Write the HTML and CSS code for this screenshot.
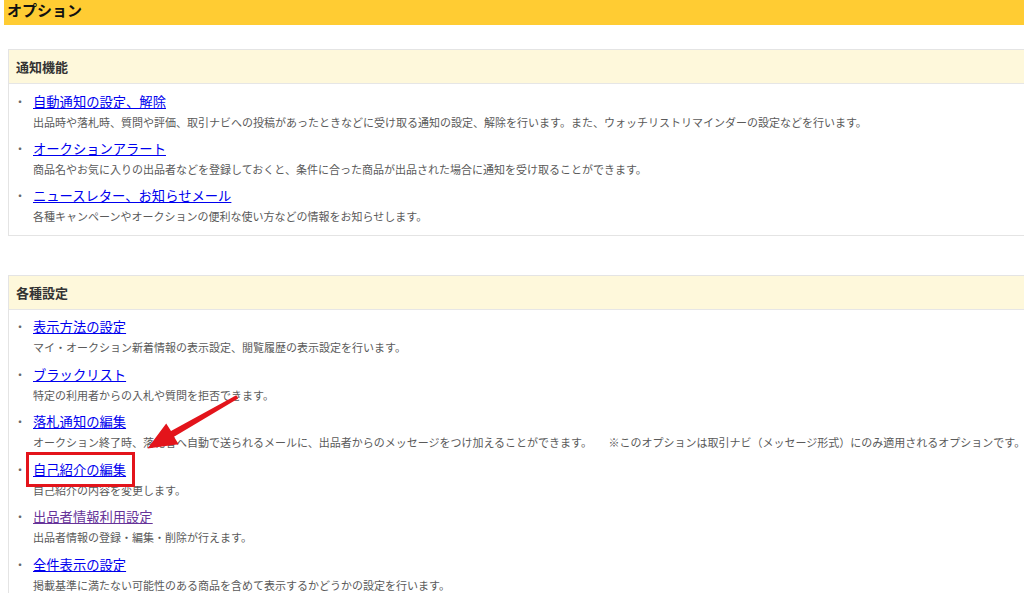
FILE: index.html
```html
<!DOCTYPE html>
<html lang="ja">
<head>
<meta charset="utf-8">
<title>オプション</title>
<link rel="stylesheet" href="styles.css">
</head>
<body>
<div class="page">
  <h1 class="title-bar">オプション</h1>

  <section class="panel panel-first">
    <h2 class="panel-head">通知機能</h2>
    <ul class="opt-list">
      <li class="opt">
        <span class="dot">・</span>
        <div class="opt-body">
          <a class="opt-link" href="#">自動通知の設定、解除</a>
          <p class="opt-desc">出品時や落札時、質問や評価、取引ナビへの投稿があったときなどに受け取る通知の設定、解除を行います。また、ウォッチリストリマインダーの設定などを行います。</p>
        </div>
      </li>
      <li class="opt">
        <span class="dot">・</span>
        <div class="opt-body">
          <a class="opt-link" href="#">オークションアラート</a>
          <p class="opt-desc">商品名やお気に入りの出品者などを登録しておくと、条件に合った商品が出品された場合に通知を受け取ることができます。</p>
        </div>
      </li>
      <li class="opt">
        <span class="dot">・</span>
        <div class="opt-body">
          <a class="opt-link" href="#">ニュースレター、お知らせメール</a>
          <p class="opt-desc">各種キャンペーンやオークションの便利な使い方などの情報をお知らせします。</p>
        </div>
      </li>
    </ul>
  </section>

  <section class="panel panel-second">
    <h2 class="panel-head">各種設定</h2>
    <ul class="opt-list">
      <li class="opt">
        <span class="dot">・</span>
        <div class="opt-body">
          <a class="opt-link" href="#">表示方法の設定</a>
          <p class="opt-desc">マイ・オークション新着情報の表示設定、閲覧履歴の表示設定を行います。</p>
        </div>
      </li>
      <li class="opt">
        <span class="dot">・</span>
        <div class="opt-body">
          <a class="opt-link" href="#">ブラックリスト</a>
          <p class="opt-desc">特定の利用者からの入札や質問を拒否できます。</p>
        </div>
      </li>
      <li class="opt">
        <span class="dot">・</span>
        <div class="opt-body">
          <a class="opt-link" href="#">落札通知の編集</a>
          <p class="opt-desc">オークション終了時、落札者へ自動で送られるメールに、出品者からのメッセージをつけ加えることができます。　　※このオプションは取引ナビ（メッセージ形式）にのみ適用されるオプションです。</p>
        </div>
      </li>
      <li class="opt opt-marked">
        <span class="dot">・</span>
        <div class="opt-body">
          <a class="opt-link" href="#">自己紹介の編集</a>
          <p class="opt-desc">自己紹介の内容を変更します。</p>
        </div>
        <span class="mark-box"></span>
      </li>
      <li class="opt">
        <span class="dot">・</span>
        <div class="opt-body">
          <a class="opt-link visited" href="#">出品者情報利用設定</a>
          <p class="opt-desc">出品者情報の登録・編集・削除が行えます。</p>
        </div>
      </li>
      <li class="opt">
        <span class="dot">・</span>
        <div class="opt-body">
          <a class="opt-link" href="#">全件表示の設定</a>
          <p class="opt-desc">掲載基準に満たない可能性のある商品を含めて表示するかどうかの設定を行います。</p>
        </div>
      </li>
    </ul>
  </section>

  <svg class="arrow" viewBox="140 385 110 75" width="110" height="75" aria-hidden="true">
    <polygon points="236.3,395.2 171,431 166.2,423.6 147.5,448.5 178.6,444.2 174,436.8 238.2,398.6" fill="#e3141b"/>
  </svg>
</div>
</body>
</html>
```

FILE: styles.css
```css
html, body {
  margin: 0;
  padding: 0;
  background: #ffffff;
  overflow: hidden;
}

body {
  font-family: "Noto Sans CJK JP", "Noto Sans", sans-serif;
  color: #333333;
}

.page {
  position: relative;
  width: 1024px;
  height: 593px;
  overflow: hidden;
}

.title-bar {
  margin: 0 0 0 4px;
  height: 25px;
  background: #ffcc33;
  font-size: 15px;
  line-height: 20px;
  font-weight: bold;
  color: #111111;
  padding-left: 3px;
  box-sizing: border-box;
}

.panel {
  margin: 24px -30px 0 8px;
  border: 1px solid #e4e4e4;
  background: #ffffff;
}

.panel-second {
  margin-top: 39px;
}

.panel-head {
  margin: 0;
  height: 33px;
  background: #fef8db;
  border-bottom: 1px solid #e6e6e6;
  font-size: 13px;
  font-weight: bold;
  line-height: 33px;
  padding-left: 7px;
  color: #333333;
}

.opt-list {
  list-style: none;
  margin: 0;
  padding: 7px 0 8px 0;
}

.panel-second .opt-list {
  padding-top: 6px;
}

.opt {
  position: relative;
  display: grid;
  grid-template-columns: 24px 1fr;
  margin-bottom: 5px;
  line-height: 21px;
}

.panel-second .opt {
  margin-bottom: 5.5px;
}

.opt:last-child {
  margin-bottom: 0;
}

.dot {
  display: block;
  height: 21px;
  font-size: 12px;
  line-height: 21px;
  padding-left: 5px;
  color: #666666;
}

.opt-body {
  min-width: 0;
  font-size: 13px;
  line-height: 21px;
}

.opt-link {
  display: block;
  width: max-content;
  height: 21px;
  font-size: 13.3px;
  line-height: 21px;
  color: #0000ee;
  text-decoration: underline;
}

.opt-link.visited {
  color: #663399;
}

.opt-desc {
  margin: 0;
  height: 21px;
  font-size: 11px;
  line-height: 21px;
  color: #5a5a5a;
  white-space: nowrap;
}

.mark-box {
  position: absolute;
  left: 17px;
  top: -7px;
  width: 109px;
  height: 35px;
  border: 3px solid #e3141b;
  box-sizing: border-box;
  pointer-events: none;
}

.arrow {
  position: absolute;
  left: 140px;
  top: 385px;
}
```
